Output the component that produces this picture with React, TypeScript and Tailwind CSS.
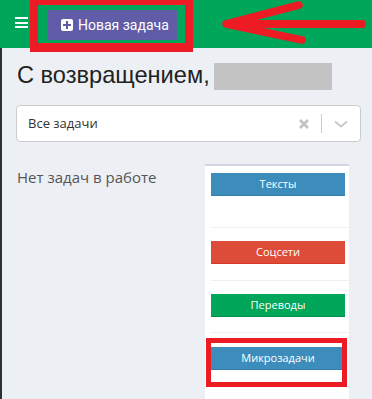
import React from "react";

function Item({ label, color, border, mt, sepMt }: { label: string; color: string; border: string; mt: string; sepMt: string }) {
  return (
    <div>
      <div className={`${mt} ${color} ${border} w-[134px] h-[23px] flex items-center justify-center text-white text-[11px]`}>{label}</div>
      <div className={`${sepMt} h-px bg-[#eeeeee]`} />
    </div>
  );
}

export default function App() {
  return (
    <div className="w-[372px] h-[399px] overflow-hidden bg-[#ecf0f5] relative" style={{ fontFamily: '"Open Sans", "Noto Sans", sans-serif' }}>
      <header className="h-12 bg-[#00a65a] flex items-start relative">
        <div className="ml-[15px] mt-[17px] w-[13px] flex flex-col gap-[2.5px]">
          <div className="h-[2px] bg-white" />
          <div className="h-[2px] bg-white" />
          <div className="h-[2px] bg-white" />
        </div>
        <button className="ml-[20px] mt-[10px] h-[30px] w-[129px] bg-[#605ca8] text-white flex items-center pl-[13px] gap-[5px] text-[14px]" style={{ fontFamily: '"Roboto", sans-serif' }}>
          <span className="w-[12px] h-[12px] bg-white rounded-[2px] flex items-center justify-center relative">
            <span className="absolute w-[8px] h-[2px] bg-[#605ca8]" />
            <span className="absolute w-[2px] h-[8px] bg-[#605ca8]" />
          </span>
          Новая задача
        </button>
        <div className="absolute left-[30px] top-0 w-[163px] h-[52px] border-[#ed1c24] border-l-[8px] border-r-[8px] border-t-[5px] border-b-[9px] z-10" />
        <svg className="absolute left-0 top-0" width="372" height="48" viewBox="0 0 372 48">
          <g stroke="#ed1c24" strokeWidth="8" strokeLinecap="round" fill="none">
            <path d="M362 24 H232" strokeLinecap="butt" />
            <path d="M362 24 H360" />
            <path d="M299 5 L226 24 L302 40" strokeLinejoin="round" strokeWidth="7.5" />
          </g>
        </svg>
      </header>
      <div className="absolute left-0 top-12 bottom-0 w-[2px] bg-[#2a3338]" />
      <main className="pl-[17px] pr-[11px]">
        <div className="mt-[13px] flex items-center h-[30px]">
          <span className="text-[#222] text-[23.6px] leading-none" style={{ fontFamily: '"Liberation Sans", Arial, sans-serif' }}>С возвращением,</span>
          <span className="ml-[4px] w-[118px] h-[27px] bg-[#c3c3c3]" />
        </div>
        <div className="mt-[14px] -ml-px h-[37px] bg-white border border-[#cccccc] rounded-[4px] flex items-center">
          <span className="ml-[11px] text-[13px] text-[#333]" style={{ fontFamily: '"Open Sans", sans-serif' }}>Все задачи</span>
          <div className="ml-auto flex items-center">
            <svg width="10" height="10" viewBox="0 0 10 10" className="mr-[12px]">
              <path d="M1 1 L9 9 M9 1 L1 9" stroke="#c2c2c2" strokeWidth="2.6" />
            </svg>
            <div className="w-px h-[19px] bg-[#cccccc]" />
            <svg width="14" height="8" viewBox="0 0 14 8" className="ml-[12px] mr-[12px]">
              <path d="M1 1.5 L7 6.5 L13 1.5" stroke="#c8c8c8" strokeWidth="1.8" fill="none" />
            </svg>
          </div>
        </div>
        <div className="mt-[22px] flex items-start">
          <div className="w-[188px] pt-[3px] text-[15px] text-[#555] leading-[20px]" style={{ fontFamily: '"Open Sans", sans-serif' }}>Нет задач в работе</div>
          <div className="w-[144px] h-[260px] bg-white border-t-2 border-[#d2d6de] pl-[6px] relative" style={{ fontFamily: '"Open Sans", sans-serif' }}>
            <Item label="Тексты" color="bg-[#3c8dbc]" border="border-b border-[#367fa9]" mt="mt-[7px]" sepMt="mt-[31px]" />
            <Item label="Соцсети" color="bg-[#dd4b39]" border="border-b border-[#d73925]" mt="mt-[13px]" sepMt="mt-[16px]" />
            <Item label="Переводы" color="bg-[#00a65a]" border="border-b border-[#008d4c]" mt="mt-[13px]" sepMt="mt-[15px]" />
            <Item label="Микрозадачи" color="bg-[#3c8dbc]" border="border-b border-[#367fa9]" mt="mt-[14px]" sepMt="mt-[16px]" />
            <div className="absolute left-px top-[172px] w-[141px] h-[49px] border-[5px] border-[#ed1c24]" />
          </div>
        </div>
      </main>
    </div>
  );
}
